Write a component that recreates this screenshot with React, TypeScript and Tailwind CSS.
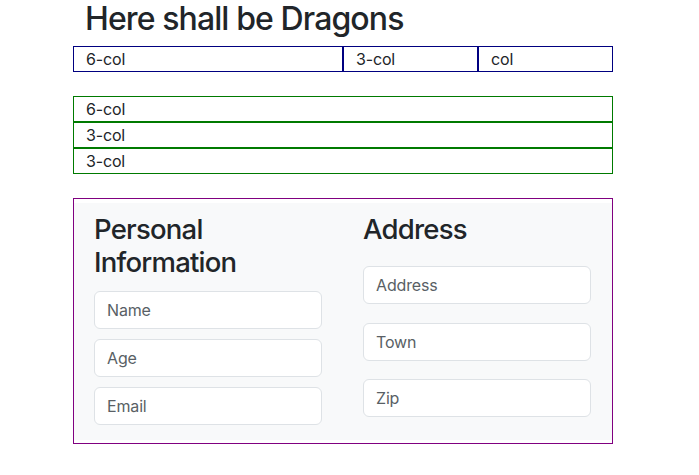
const font = 'font-["Inter","Liberation_Sans",sans-serif]';

function Field({ placeholder, className = '' }: { placeholder: string; className?: string }) {
  return (
    <input
      type="text"
      placeholder={placeholder}
      className={`block h-[38px] w-full rounded-[6px] border border-[#dee2e6] bg-white px-3 text-[16px] tracking-[-0.01em] text-[#212529] placeholder:text-[#595f65] outline-none ${className}`}
    />
  );
}

export default function App() {
  return (
    <div className={`min-h-[475px] bg-white text-[#212529] tracking-[-0.01em] ${font}`}>
      <div className="ml-[73px] w-[540px]">
        {/* Title */}
        <h1 className="mb-2 px-3 text-[32px] font-medium leading-[1.2] tracking-[-0.028em]">Here shall be Dragons</h1>

        {/* Horizontal row */}
        <div className="grid grid-cols-[270px_135px_135px] text-[16px] leading-6">
          <div className="border border-[#000080] px-3">6-col</div>
          <div className="border border-[#000080] px-3">3-col</div>
          <div className="border border-[#000080] px-3">col</div>
        </div>

        {/* Stacked rows */}
        <div className="mt-6 flex flex-col text-[16px] leading-6">
          <div className="border border-[#007a00] px-3">6-col</div>
          <div className="border border-[#007a00] px-3">3-col</div>
          <div className="border border-[#007a00] px-3">3-col</div>
        </div>

        {/* Form panel */}
        <div className="mt-6 border border-[#800080] pt-1 pb-[3px]">
          <div className="grid grid-cols-2 bg-[#f8f9fa] pt-[10px] pb-[15px]">
            <div className="pl-5 pr-[21px]">
              <h2 className="mb-3 text-[27.5px] font-medium leading-[33px] tracking-[-0.028em]">Personal Information</h2>
              <div className="flex flex-col gap-[10px]">
                <Field placeholder="Name" />
                <Field placeholder="Age" />
                <Field placeholder="Email" />
              </div>
            </div>
            <div className="pl-5 pr-[21px]">
              <h2 className="mb-5 text-[27.5px] font-medium leading-[33px] tracking-[-0.028em]">Address</h2>
              <div className="flex flex-col gap-[18.5px]">
                <Field placeholder="Address" />
                <Field placeholder="Town" />
                <Field placeholder="Zip" />
              </div>
            </div>
          </div>
        </div>
      </div>
    </div>
  );
}
